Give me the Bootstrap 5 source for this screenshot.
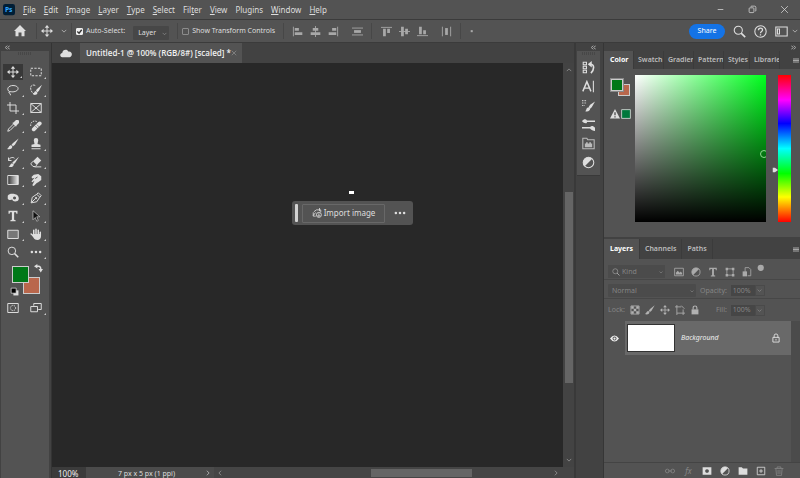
<!DOCTYPE html>
<html lang="en">
<head>
<meta charset="utf-8">
<meta name="viewport" content="width=device-width, initial-scale=1">
<title>Untitled-1</title>
<link rel="stylesheet" href="https://cdn.jsdelivr.net/npm/bootstrap@5.3.0/dist/css/bootstrap.min.css">
<style>
:root{--panel:#535353;--dark:#424242;--edge:#3b3b3b;--canvas:#282828;--ink:#dedede;--faint:#858585}
body{font:8px/12px "Noto Sans","Open Sans",sans-serif;color:var(--ink);background:var(--dark);overflow:hidden}
svg{display:block;flex:none;width:12px;height:12px;fill:none;stroke:currentColor;stroke-width:1.3}
.fl{fill:currentColor;stroke:none}
button,.plain{background:none;border:0;padding:0;color:inherit;font:inherit;text-decoration:none;white-space:nowrap}
button{display:flex;align-items:center;justify-content:center}
.menubar{height:19px;background:var(--panel);padding-left:3px;padding-right:11px}
.menubar nav{gap:8px;margin-left:8px}
.menubar u{text-underline-offset:1px}
.logo rect{fill:#001e36;stroke:none}
.logo text{fill:#31a8ff;stroke:none}
.winbtns{gap:23px}
.winbtns svg{width:9px;height:9px}
.options{height:24px;background:var(--panel);border-top:1px solid var(--edge);border-bottom:1px solid var(--edge);padding-right:2px;font-size:7px}
.homebtn{margin:0 10px 0 14px}
.vline{width:1px;height:16px;background:#474747}
.tick{width:7px;height:7px;margin:0 3px 0 0;appearance:none;border:1px solid #8c8c8c;border-radius:1px}
.tick:checked{background:#eee;border-color:#eee}
.tickwrap{position:relative}
.tickwrap svg{position:absolute;left:0;width:7px;height:7px;color:#333;stroke-width:3}
.pick{appearance:none;border:0;border-radius:1px;background:#474747 url("data:image/svg+xml,%3Csvg xmlns='http://www.w3.org/2000/svg' viewBox='0 0 8 8'%3E%3Cpath d='M1 3l3 3 3-3' fill='none' stroke='%23999'/%3E%3C/svg%3E") no-repeat right 2px center/5px 5px;color:inherit;font:inherit;padding:0 8px 0 5px}
.options .pick{width:36px;height:14px}
.align{color:#a8a8a8;gap:6px;margin-left:7px}
.align .vline{margin:0 2px;align-self:center}
.align svg{width:11px;height:11px}
.align button{width:12px}
.align .gapbtn{margin-left:6px}
.share{width:36px;height:15px;border-radius:8px;background:#1473e6;color:#fff}
.big{width:13px;height:13px}
.hm{width:6px;height:6px;color:#aaa}
.tiny{height:8px;background:var(--dark);color:#ccc}
.tiny svg{width:5px;height:5px}
.tools{width:52px;background:var(--dark);padding:0 2px 0 1px;border-right:1px solid #343434}
.toolbody{background:var(--panel)}
.grip{height:12px;padding-top:1px}
.grip span{display:block;width:14px;height:3px;margin:auto;background:repeating-linear-gradient(90deg,#474747 0 1px,#535353 1px 2px)}
.toolgrid{display:grid;grid-template-columns:24px 22px;grid-auto-rows:18px}
.toolgrid button{position:relative}
.toolgrid button.on{background:#383838;margin:1px 2px}
.toolgrid button.more::after{content:"";position:absolute;right:1px;bottom:2px;border:1px solid;border-color:transparent #ccc #ccc transparent}
.swatchbox{position:relative;height:38px}
.swatchbox i,.pair i{position:absolute;border:1px solid #ccc}
.swatchbox .bg{left:22px;top:16px;width:17px;height:17px;background:#b9674c}
.swatchbox .fg{left:11px;top:5px;width:17px;height:17px;background:#007818}
.swatchbox svg{position:absolute;width:9px;height:9px}
.swatchbox .swap{left:33px;top:3px}
.swatchbox .reset{left:9px;top:26px}
.tabs{height:20px;background:var(--dark)}
.doctab{width:162px;background:var(--panel);padding:0 6px;font-family:"Open Sans","Noto Sans",sans-serif;font-weight:600;font-size:8px;color:#f0f0f0}
.view{background:var(--canvas);position:relative;overflow:hidden}
.art{position:absolute;left:297px;top:128px;width:5px;height:3px;background:#fff}
.taskbar{position:absolute;left:240px;top:138px;height:24px;width:121px;border-radius:3px;background:#535353;padding:3px}
.taskbar .handle{width:3px;height:18px;border-radius:1px;background:#d2d2d2;margin-right:4px}
.taskbar .imp{width:83px;height:19px;border:1px solid #686868;border-radius:1px;gap:2px}
.taskbar .dots{margin-left:4px}
.imp svg{width:10px;height:10px}
.vscroll{width:11px;background:#434343;color:#888}
.vscroll svg,.hscroll svg{width:6px;height:6px}
.vthumb{width:8px;height:191px;margin-top:44px;background:#656565}
.status{height:11px;background:#454545;font-size:7px;line-height:11px}
.status .zoomv{width:34px;background:#3b3b3b;border:0;color:#eee;font-size:8px;line-height:11px;padding:1px 0 0 6px;height:11px}
.status .info{width:128px;background:#4b4b4b;padding:1px 3px 0 32px}
.hscroll{color:#888;padding:0 15px 0 3px}
.hthumb{width:101px;height:8px;margin-left:66px;background:#656565}
.strip{width:29px;background:var(--dark);border-left:2px solid #393939;padding:0 3px 0 1px}
.stripbody{background:var(--panel);height:125px;border-bottom:1px solid #393939}
.stripbody .stack{gap:6px;margin-top:-2px}
.stack svg{width:13px;height:13px}
.side{width:197px;background:var(--dark);border-left:1px solid #363636}
.ptabs{background:var(--dark);font-size:7px;color:#bcbcbc;font-weight:600;padding-right:1px}
.ptabs button{padding:0 5px;height:100%;border-right:1px solid #3b3b3b}
.ptabs button.on{background:var(--panel);color:#fff;font-weight:700}
.colortabs{height:18px}
.colortabs button{padding:0 0 0 4px;width:30px;overflow:hidden;justify-content:flex-start}
.colortabs button.slim{width:26px}
.colortabs button.on{padding:0 0 0 6px}
.laytabs button.on{padding:0 6px}
.ptabs svg{width:6px;height:7px;color:#aaa}
.colorbody{background:var(--panel);padding:6px 9px 15px 6px;height:168px}
.pair{position:relative;width:25px;height:24px}
.pair .b{left:8px;top:9px;width:12px;height:12px;background:#b9674c}
.pair .f{left:1px;top:4px;width:12px;height:12px;background:#007818;outline:1px solid #888}
.warn{gap:1px;margin-top:10px}
.warn svg{width:10px;height:10px}
.field{position:relative;overflow:hidden;background:linear-gradient(0deg,#000,transparent),linear-gradient(90deg,#fff,#00ff1e);width:131px;flex:none}
.field span{position:absolute;right:-2px;top:75px;width:8px;height:8px;border:1px solid #8fd88f;border-radius:50%}
.hue{position:relative;width:13px;flex:none;margin-left:12px;background:linear-gradient(#f00,#f0f 17%,#00f 33%,#0ff 50%,#0f0 67%,#ff0 83%,#f00)}
.hue svg{position:absolute;left:-6px;top:92px;width:6px;height:6px}
.laytabs{height:20px;margin-top:2px}
.lay{background:var(--panel);font-size:7px;color:var(--faint)}
.rowbar{padding:0 4px;border-bottom:1px solid #474747}
.kind{height:21px;padding-top:5px;color:#a0a0a0}
.modes{height:19px;padding-top:3px}
.locks{height:22px}
.kindbox{width:57px;height:13px;background:#4b4b4b;padding-left:4px}
.kindbox svg{width:8px;height:8px}
.kindbox .pick{background-color:transparent;padding-left:2px;color:#858585}
.lay .pick{background-size:4px 4px}
.filters{gap:5px;margin-left:8px;color:#aaa}
.filters svg{width:10px;height:10px;margin:0 1px}
.filters .knob{margin:-5px 0 0 -2px}
.modes .pick{width:88px;height:13px;background-color:#4b4b4b;padding-left:4px}
.num{width:24px;height:11px;background:#464646;border:0;color:#858585;font:inherit;padding:0 0 0 2px}
.drop{width:10px;height:11px;border:1px solid #4a4a4a}
.ics{gap:5px;color:#b2b2b2;margin-left:5px}
.ics svg{width:10px;height:10px}
.rowbar .drop svg{width:5px;height:5px}
.layer{height:34px}
.layer .eye{width:21px;color:#eee}
.layer .eye svg{width:9px;height:9px}
.rowsel{background:#696969;color:#eee;padding:0 10px 0 2px}
.rowsel svg{width:10px;height:10px}
.thumb{width:48px;height:28px;background:#fff;border:1px solid #333;margin-right:6px}
.gut{width:9px;background:#4b4b4b}
.foot{height:16px;border-top:1px solid #444;padding:0 16px 0 0;gap:8px;color:#ddd}
.foot svg{width:10px;height:10px}
.foot .off{color:#858585}
.foot em{font-size:8px;width:11px}
</style>
<script src="https://cdn.jsdelivr.net/npm/bootstrap@5.3.0/dist/js/bootstrap.bundle.min.js"></script>
</head>
<body>
<svg class="d-none" aria-hidden="true">
<symbol id="move" viewBox="0 0 16 16"><path d="M8 2v12M2 8h12"/><path class="fl" d="M8 0l3 3.500H5zM8 16l3-3.500H5zM0 8l3.500-3v6zM16 8l-3.500-3v6z"/></symbol>
<symbol id="chev" viewBox="0 0 8 8"><path d="M1 2.500l3 3 3-3"/></symbol>
<symbol id="up" viewBox="0 0 8 8"><path d="M1 5.500l3-3 3 3"/></symbol>
<symbol id="lt" viewBox="0 0 8 8"><path d="M5.500 1l-3 3 3 3"/></symbol>
<symbol id="rt" viewBox="0 0 8 8"><path d="M2.500 1l3 3-3 3"/></symbol>
<symbol id="dlt" viewBox="0 0 8 8"><path d="M3.500 1l-3 3 3 3M7.500 1l-3 3 3 3"/></symbol>
<symbol id="drt" viewBox="0 0 8 8"><path d="M.5 1l3 3-3 3M4.500 1l3 3-3 3"/></symbol>
<symbol id="ex" viewBox="0 0 16 16"><path d="M2 2l12 12M14 2L2 14"/></symbol>
<symbol id="ham" viewBox="0 0 8 8"><path d="M0 2h8M0 4h8M0 6h8"/></symbol>
<symbol id="glass" viewBox="0 0 16 16"><circle cx="6.500" cy="6.500" r="5"/><path d="M10 10l5 5" stroke-width="2"/></symbol>
<symbol id="brush" viewBox="0 0 16 16"><path class="fl" d="M15.500.5L8 6.500 6 9l2 2 2.500-2zM5.500 9.500c-3 0-2.500 3-5.500 5 4 1.500 7.500-.5 7-3.500z"/></symbol>
<symbol id="half" viewBox="0 0 16 16"><circle cx="8" cy="8" r="6.500"/><path class="fl" d="M12.600 3.400A6.500 6.500 0 0 0 3.400 12.600z"/></symbol>
<symbol id="lock" viewBox="0 0 16 16"><path d="M5 7V4.500a3 3 0 0 1 6 0V7" stroke-width="1.800"/><path class="fl" d="M2.500 7h11v8h-11z"/></symbol>
<symbol id="tee" viewBox="0 0 16 16"><path class="fl" d="M2 1h12v4h-1.500L12 3H9.500v10l2 .6V15h-7v-1.400l2-.6V3H4l-.5 2H2z"/></symbol>
<symbol id="dots" viewBox="0 0 16 16"><g class="fl"><circle cx="2.500" cy="8" r="1.700"/><circle cx="8" cy="8" r="1.700"/><circle cx="13.500" cy="8" r="1.700"/></g></symbol>
</svg>

<div class="vh-100 d-flex flex-column">
<header class="menubar d-flex align-items-center">
 <svg class="logo" viewBox="0 0 16 16"><rect width="16" height="15" rx="3"/><text x="2.500" y="11" font-size="9" font-weight="700" font-family="Noto Sans">Ps</text></svg>
 <nav class="d-flex" aria-label="Main menu"><button><span><u>F</u>ile</span></button><button><span><u>E</u>dit</span></button><button><span><u>I</u>mage</span></button><button><span><u>L</u>ayer</span></button><button><span><u>T</u>ype</span></button><button><span><u>S</u>elect</span></button><button><span>Fil<u>t</u>er</span></button><button><span><u>V</u>iew</span></button><button>Plugins</button><button><span><u>W</u>indow</span></button><button><span><u>H</u>elp</span></button></nav>
 <div class="winbtns d-flex ms-auto"><button aria-label="Minimize"><svg viewBox="0 0 16 16"><path d="M3 8h10"/></svg></button><button aria-label="Restore"><svg viewBox="0 0 16 16"><rect x="2" y="5" width="8.500" height="8.500" rx="1.500"/><path d="M5 3.500Q5 2 6.500 2h5Q14 2 14 4.500v5Q14 11 12.500 11"/></svg></button><button aria-label="Close"><svg viewBox="0 0 16 16"><use href="#ex"/></svg></button></div>
</header>

<section class="options d-flex align-items-center">
 <button class="homebtn" aria-label="Home"><svg viewBox="0 0 16 16"><path class="fl" d="M8 0L0 8h2v7h4V10h4v5h4V8h2z"/></svg></button>
 <span class="vline"></span>
 <button class="ms-1" aria-label="Move tool"><svg viewBox="0 0 16 16"><use href="#move"/></svg></button>
 <button class="ms-2" aria-label="Presets"><svg class="hm" viewBox="0 0 8 8"><use href="#chev"/></svg></button>
 <span class="vline mx-1"></span>
 <label class="tickwrap d-flex align-items-center"><input class="tick" type="checkbox" checked><svg viewBox="0 0 16 16"><path d="M3 8l4 4 6-8"/></svg>Auto-Select:</label>
 <select class="pick mt-1 ms-2" aria-label="Auto-select target"><option>Layer</option></select>
 <span class="vline ms-2 me-1"></span>
 <label class="d-flex align-items-center"><input class="tick" type="checkbox">Show Transform Controls</label>
 <span class="vline ms-2"></span>
 <div class="align d-flex">
  <button aria-label="Align left"><svg viewBox="0 0 16 16"><path d="M2 1v14"/><path class="fl" d="M4 3h6v4H4zM4 9h11v4H4z"/></svg></button>
  <button aria-label="Align centers"><svg viewBox="0 0 16 16"><path d="M8 0v16"/><path class="fl" d="M4 3h8v4H4zM1 9h14v4H1z"/></svg></button>
  <button aria-label="Align right"><svg viewBox="0 0 16 16"><path d="M14 1v14"/><path class="fl" d="M6 3h6v4H6zM1 9h11v4H1z"/></svg></button>
  <button class="gapbtn" aria-label="Distribute vertically"><svg viewBox="0 0 16 16"><path d="M0 3h16M0 13h16"/><path class="fl" d="M3 6h10v4H3z"/></svg></button>
  <span class="vline"></span>
  <button aria-label="Align top"><svg viewBox="0 0 16 16"><path d="M0 2h16"/><path class="fl" d="M3 4h4v11H3zM9 4h4v6H9z"/></svg></button>
  <button aria-label="Align middles"><svg viewBox="0 0 16 16"><path d="M0 8h16"/><path class="fl" d="M3 1h4v14H3zM9 4h4v8H9z"/></svg></button>
  <button aria-label="Align bottom"><svg viewBox="0 0 16 16"><path d="M0 14h16"/><path class="fl" d="M3 1h4v11H3zM9 6h4v6H9z"/></svg></button>
  <button class="gapbtn" aria-label="Distribute horizontally"><svg viewBox="0 0 16 16"><path d="M2 1v14M14 1v14"/><path class="fl" d="M6 3h4v10H6z"/></svg></button>
  <span class="vline"></span>
  <button aria-label="More"><svg viewBox="0 0 16 16"><path class="fl" d="M1 6h3v3H1z"/></svg></button>
 </div>
 <button class="share ms-auto">Share</button>
 <button class="ms-2" aria-label="Search"><svg class="big" viewBox="0 0 16 16"><use href="#glass"/></svg></button>
 <button class="ms-2" aria-label="Help"><svg class="big" viewBox="0 0 16 16"><circle cx="8" cy="8" r="7"/><path d="M5.500 6.500C5.500 3 10.500 3 10.500 6.300 10.500 8 8 8 8 10M8 11.300v1.500" stroke-width="1.600"/></svg></button>
 <button class="ms-2" aria-label="Workspace"><svg class="big" viewBox="0 0 16 16"><path d="M1 2.500h14v11H1z"/><path d="M3 5h2.500v6H3z"/></svg></button>
 <button class="ms-1" aria-label="Workspace list"><svg class="hm" viewBox="0 0 8 8"><use href="#chev"/></svg></button>
</section>

<div class="d-flex flex-grow-1 overflow-hidden">
<aside class="tools d-flex flex-column">
 <div class="tiny d-flex align-items-center ps-1"><svg viewBox="0 0 8 8"><use href="#dlt"/></svg></div>
 <div class="toolbody flex-grow-1">
  <div class="grip"><span></span></div>
  <div class="toolgrid">
   <button class="on more" aria-label="Move"><svg viewBox="0 0 16 16"><use href="#move"/></svg></button>
   <button class="more" aria-label="Marquee"><svg viewBox="0 0 16 16"><path d="M1 3h14v10H1z" stroke-dasharray="3 1.800"/></svg></button>
   <button class="more" aria-label="Lasso"><svg viewBox="0 0 16 16"><path d="M4 11C-2 7 2 2 8 2c9 0 9 8 0 8.500-4 0-5-1-5.500.5s3 1 2 4"/></svg></button>
   <button class="more" aria-label="Object selection"><svg viewBox="0 0 16 16"><path d="M7 2C3 0 0 3 1 7s3 6 6 7" stroke-dasharray="3 1"/><path class="fl" d="M16 1L9 7l-1 2 2 2 2-2zM8 9.500c-3 0-2 3-4 4.500 4 1 6-.5 6-2.500z"/></svg></button>
   <button class="more" aria-label="Crop"><svg viewBox="0 0 16 16" stroke-width="1.800"><path d="M4 0v12h12M0 4h12v12"/></svg></button>
   <button aria-label="Frame"><svg viewBox="0 0 16 16"><path d="M1 2h14v12H1zM1 2l14 12M15 2L1 14"/></svg></button>
   <button class="more" aria-label="Eyedropper"><svg viewBox="0 0 16 16"><path d="M9 5L2 12l-1 3 3-1 7-7"/><path class="fl" d="M7 4l2-1 3-3c3-1 5 1 4 4l-3 3-1 2z"/></svg></button>
   <button class="more" aria-label="Healing brush"><svg viewBox="0 0 16 16"><path d="M1 8C0 3 5 0 9 2" stroke-dasharray="2 1.500"/><path d="M5 12.500l8-8" stroke-width="5" stroke-linecap="round"/><path d="M7 8l4 4M9 6l3.500 3.500" stroke="#535353" stroke-width=".8"/></svg></button>
   <button class="more" aria-label="Brush"><svg viewBox="0 0 16 16"><use href="#brush"/></svg></button>
   <button class="more" aria-label="Clone stamp"><svg viewBox="0 0 16 16"><path class="fl" d="M6 8L5 3a3 3 0 0 1 6 0l-1 5 4 1v3H2V9zM2 13.500h12V15H2z"/></svg></button>
   <button class="more" aria-label="History brush"><svg viewBox="0 0 16 16"><path d="M2 6c1-4 6-5 8-3M2 2v4h4"/><path class="fl" d="M16 1L9 7 7 9l2 2 2-2zM7 10c-3 0-2 3-5 4 4 2 7 0 7-3z"/></svg></button>
   <button class="more" aria-label="Eraser"><svg viewBox="0 0 16 16"><path class="fl" d="M10 1l5 5-6 6-5-5z"/><path d="M4 7l-3 3.500L4 14h3l2.500-2.500M6 14.500h9"/></svg></button>
   <button class="more" aria-label="Gradient"><svg viewBox="0 0 16 16"><defs><linearGradient id="gr"><stop stop-color="#333"/><stop offset="1" stop-color="#eee"/></linearGradient></defs><path fill="url(#gr)" d="M1 2h14v12H1z"/></svg></button>
   <button class="more" aria-label="Smudge"><svg viewBox="0 0 16 16"><path class="fl" d="M2 4l3-3 6-1 4 3v5l-4 3-2 1-4 4-2-1 3-6-3 2-1-1 4-5-3 1z"/><path d="M7 6l3-2" stroke="#535353"/></svg></button>
   <button class="more" aria-label="Dodge"><svg viewBox="0 0 16 16"><path class="fl" fill-rule="evenodd" d="M1 5c2-3 6-3 10-2 5 1 6 7 3 9-3 1-6 1-7-2-2 1-5 1-6-1zM10 6a2 2 0 1 0 .1 0z"/></svg></button>
   <button class="more" aria-label="Pen"><svg viewBox="0 0 16 16"><path d="M1.500 14.500L3 7l6-4 4 4-4 6zM2 14l5-5M9 3l2-2 4 4-2 2"/><circle class="fl" cx="8" cy="8" r="1.500"/></svg></button>
   <button class="more" aria-label="Type"><svg viewBox="0 0 16 16"><use href="#tee"/></svg></button>
   <button class="more" aria-label="Path selection"><svg viewBox="0 0 16 16"><path d="M4 1v12l3-3 2 5 2-1-2-5h4z" fill="#111" stroke-width=".8"/></svg></button>
   <button class="more" aria-label="Rectangle"><svg viewBox="0 0 16 16"><path d="M1 3h14v11H1z" fill="#777"/></svg></button>
   <button class="more" aria-label="Hand"><svg viewBox="0 0 16 16"><path d="M5 9V3M8 8V1.500M11 8V3M13.700 9V5.500M5 11L1.500 8" stroke-width="2" stroke-linecap="round"/><path class="fl" d="M4 8h10.700v3c0 3-2 5-5 5-2 0-4-1-5-3l-2-3z"/></svg></button>
   <button aria-label="Zoom"><svg viewBox="0 0 16 16"><use href="#glass"/></svg></button>
   <button class="more" aria-label="Edit toolbar"><svg viewBox="0 0 16 16"><use href="#dots"/></svg></button>
  </div>
  <div class="swatchbox"><i class="bg"></i><i class="fg"></i><svg class="swap" viewBox="0 0 16 16"><path d="M4 4h4q4 0 4 5" stroke-width="2.500"/><path class="fl" d="M0 4l6-4v8zM12 15L8 9h8z"/></svg><svg class="reset" viewBox="0 0 16 16"><path class="fl" d="M6 6h9v9H6z"/><path d="M2 2h9v9H2z" fill="#000"/></svg></div>
  <div class="toolgrid">
   <button aria-label="Quick mask"><svg viewBox="0 0 16 16"><path d="M1 2h14v12H1z"/><circle cx="8" cy="8" r="3.500" stroke-dasharray="1.500 1"/></svg></button>
   <button class="more" aria-label="Screen mode"><svg viewBox="0 0 16 16"><path d="M5 5V2h10v8h-4M1 6h9v7H1z"/></svg></button>
  </div>
 </div>
</aside>

<main class="d-flex flex-column flex-grow-1 overflow-hidden">
 <div class="tabs d-flex"><button class="px-2" aria-label="Cloud documents"><svg viewBox="0 0 16 16"><path class="fl" d="M3 13.500C-1 13 0 8 3 8c0-5 7-6 8-2 6-1 6 7 2 7.500z"/></svg></button>
 <div class="doctab d-flex align-items-center justify-content-between"><a class="plain" href="#doc">Untitled-1 @ 100% (RGB/8#) [scaled] *</a><button aria-label="Close document"><svg class="hm" viewBox="0 0 16 16"><use href="#ex"/></svg></button></div></div>
 <div class="d-flex flex-grow-1">
  <div class="view flex-grow-1" id="doc"><div class="art"></div>
   <div class="taskbar d-flex align-items-center"><span class="handle"></span><button class="imp"><svg viewBox="0 0 16 16"><path d="M3 6l4-3h7v4M2 7v6h4M2 12l4-5"/><circle cx="11" cy="11" r="4"/><path d="M11 8.500v5M9 11.500l2 2 2-2M12 0v5"/></svg>Import image</button><button class="dots flex-grow-1" aria-label="More options"><svg viewBox="0 0 16 16"><use href="#dots"/></svg></button></div>
  </div>
  <div class="vscroll d-flex flex-column align-items-center justify-content-between py-1"><svg viewBox="0 0 8 8"><use href="#up"/></svg><span class="vthumb"></span><svg viewBox="0 0 8 8"><use href="#chev"/></svg></div>
 </div>
 <div class="status d-flex"><input class="zoomv" value="100%" aria-label="Zoom level"><div class="info d-flex justify-content-between align-items-center"><span>7 px x 5 px (1 ppi)</span><svg class="hm" viewBox="0 0 8 8"><use href="#rt"/></svg></div>
 <div class="hscroll d-flex flex-grow-1 align-items-center justify-content-between"><svg viewBox="0 0 8 8"><use href="#lt"/></svg><span class="hthumb"></span><svg viewBox="0 0 8 8"><use href="#rt"/></svg></div></div>
</main>

<aside class="strip">
 <div class="tiny d-flex align-items-center justify-content-end pe-1"><svg viewBox="0 0 8 8"><use href="#dlt"/></svg></div>
 <div class="stripbody"><div class="grip"><span></span></div>
 <div class="stack d-flex flex-column align-items-center">
  <button aria-label="History"><svg viewBox="0 0 16 16"><path d="M1.500 1.500h4v3h-4zM1.500 6.500h4v3h-4zM1.500 11.500h4v3h-4z"/><path d="M10 4c6 0 5 7 1 11" stroke-width="2"/><path class="fl" d="M7 4l5-4v8z"/></svg></button>
  <button aria-label="Character"><svg viewBox="0 0 16 16"><path d="M1 14L6 2l5 12M3 10h6" stroke-width="1.800"/><path d="M14 1v14"/></svg></button>
  <button aria-label="Brush settings"><svg viewBox="0 0 16 16"><path d="M0 2h5M0 5h5M0 8h3" stroke-dasharray="1 1"/><path class="fl" d="M16 3l-6 4-2 3 2 2 2-2zM8 10.500c-3 0-2 3-4 4.500 4 1 6-1 6-3z"/></svg></button>
  <button aria-label="Brushes"><svg viewBox="0 0 16 16"><path d="M5 4h11M0 12h11" stroke-width="2"/><path class="fl" d="M0 4c2-3 5-3 6-1v3C4 7 2 6 0 4zM16 16c-2 0-5-1-6-3v-2c2-2 4-1 6 1z"/></svg></button>
  <button aria-label="Plugins"><svg viewBox="0 0 16 16" opacity=".75"><path d="M1 14.500V1.500h5l1 2h8v11z"/><path class="fl" d="M3.500 8H5V6.500h2V8h2V6.500h2V8h1.500v4.500h-9z"/></svg></button>
  <button aria-label="Adjustments"><svg viewBox="0 0 16 16"><use href="#half"/></svg></button>
 </div></div>
</aside>

<aside class="side d-flex flex-column">
 <div class="tiny d-flex align-items-center justify-content-end pe-1"><svg viewBox="0 0 8 8"><use href="#drt"/></svg></div>
 <div class="ptabs colortabs d-flex align-items-center"><button class="on">Color</button><button>Swatch</button><button>Gradier</button><button>Pattern</button><button class="slim">Styles</button><button>Librarie</button><button class="border-0 ms-auto w-auto p-0" aria-label="Color panel menu"><svg viewBox="0 0 8 8"><use href="#ham"/></svg></button></div>
 <div class="colorbody d-flex">
  <div><div class="pair"><i class="b"></i><i class="f"></i></div><div class="warn d-flex align-items-center"><svg viewBox="0 0 16 16"><path class="fl" d="M8 0l8 15H0z"/><path d="M8 5v5M8 11.500v2" stroke="#444" stroke-width="2"/></svg><svg viewBox="0 0 16 16"><path d="M1 1h14v14H1z" fill="#00783c"/></svg></div></div>
  <div class="field"><span></span></div>
  <div class="hue"><svg viewBox="0 0 8 8"><path class="fl" d="M1 1h3l4 3-4 3H1z"/></svg></div>
 </div>
 <div class="ptabs laytabs d-flex align-items-center"><button class="on">Layers</button><button>Channels</button><button>Paths</button><button class="border-0 ms-auto p-0" aria-label="Layers panel menu"><svg viewBox="0 0 8 8"><use href="#ham"/></svg></button></div>
 <div class="lay flex-grow-1 d-flex flex-column">
  <div class="rowbar kind d-flex align-items-center"><div class="kindbox d-flex align-items-center"><svg viewBox="0 0 16 16"><use href="#glass"/></svg><select class="pick flex-grow-1" aria-label="Filter kind"><option>Kind</option></select></div>
   <div class="filters d-flex"><button aria-label="Pixel layers"><svg viewBox="0 0 16 16"><path d="M1 2h14v12H1z"/><path class="fl" d="M3 12V9l3-3 3 3 2-2 2 3v2z"/></svg></button><button aria-label="Adjustment layers"><svg viewBox="0 0 16 16"><use href="#half"/></svg></button><button aria-label="Type layers"><svg viewBox="0 0 16 16"><use href="#tee"/></svg></button><button aria-label="Shape layers"><svg viewBox="0 0 16 16"><path d="M3 3h10v10H3z"/><path class="fl" d="M1 1h4v4H1zM11 1h4v4h-4zM1 11h4v4H1zM11 11h4v4h-4z"/></svg></button><button aria-label="Smart objects"><svg viewBox="0 0 16 16"><path d="M5 8V1h6l3 3v10H9"/><path class="fl" d="M1 7h7v8H1z"/></svg></button><button class="knob" aria-label="Filter toggle"><svg viewBox="0 0 16 16"><circle class="fl" cx="6" cy="6" r="5"/></svg></button></div></div>
  <div class="rowbar modes d-flex align-items-center"><select class="pick" aria-label="Blend mode"><option>Normal</option></select><label class="ms-1 me-1" for="op">Opacity:</label><input id="op" class="num" value="100%"><button class="drop" aria-label="Opacity slider"><svg viewBox="0 0 8 8"><use href="#chev"/></svg></button></div>
  <div class="rowbar locks border-0 d-flex align-items-center"><span>Lock:</span><div class="ics d-flex"><button aria-label="Lock transparency"><svg viewBox="0 0 16 16"><path d="M1.500 1.500h13v13h-13z"/><path class="fl" d="M2 2h4v4H2zM10 2h4v4h-4zM6 6h4v4H6zM2 10h4v4H2zM10 10h4v4h-4z"/></svg></button><button aria-label="Lock pixels"><svg viewBox="0 0 16 16"><use href="#brush"/></svg></button><button aria-label="Lock position"><svg viewBox="0 0 16 16"><use href="#move"/></svg></button><button aria-label="Lock artboard"><svg viewBox="0 0 16 16"><path d="M0 3h10M3 0v16M3 13h13M13 16V7M10 1l5 5"/></svg></button><button aria-label="Lock all"><svg viewBox="0 0 16 16"><use href="#lock"/></svg></button></div><label class="ms-3 me-1" for="fi">Fill:</label><input id="fi" class="num" value="100%"><button class="drop" aria-label="Fill slider"><svg viewBox="0 0 8 8"><use href="#chev"/></svg></button></div>
  <div class="flex-grow-1 d-flex"><div class="flex-grow-1"><div class="layer d-flex"><button class="eye" aria-label="Toggle visibility"><svg viewBox="0 0 16 16"><path class="fl" fill-rule="evenodd" d="M0 8q8-11 16 0-8 11-16 0zm8-3.500a3.500 3.500 0 1 0 .1 0z"/><circle class="fl" cx="8" cy="8" r="2"/></svg></button><div class="rowsel flex-grow-1 d-flex align-items-center"><span class="thumb"></span><em class="flex-grow-1">Background</em><svg viewBox="0 0 16 16"><path d="M3 7h10v7.500H3zM5 7V4.500a3 3 0 0 1 6 0V7M8 9.500v2.500"/></svg></div></div></div><div class="gut"></div></div>
  <div class="foot d-flex align-items-center justify-content-end"><button class="off" aria-label="Link layers"><svg viewBox="0 0 16 16"><rect x="0.700" y="5" width="6" height="6" rx="3"/><rect x="9.300" y="5" width="6" height="6" rx="3"/><path d="M5 8h6"/></svg></button><button class="off" aria-label="Layer style"><em>fx</em></button><button aria-label="Add mask"><svg viewBox="0 0 16 16"><path class="fl" fill-rule="evenodd" d="M1 2h14v12H1zM8 5a3 3 0 1 0 .1 0z"/></svg></button><button aria-label="New adjustment"><svg viewBox="0 0 16 16"><use href="#half"/></svg></button><button aria-label="New group"><svg viewBox="0 0 16 16"><path class="fl" d="M1 2h5l2 2h7v10H1z"/></svg></button><button aria-label="New layer"><svg viewBox="0 0 16 16"><path d="M2 2h12v12H2zM8 5v6M5 8h6"/></svg></button><button class="off" aria-label="Delete layer"><svg viewBox="0 0 16 16"><path d="M1 4h14M5 4V1.500h6V4M3 4l1 11h8l1-11M6.500 6v7M9.500 6v7"/></svg></button></div>
 </div>
</aside>
</div>
</div>
</body>
</html>
